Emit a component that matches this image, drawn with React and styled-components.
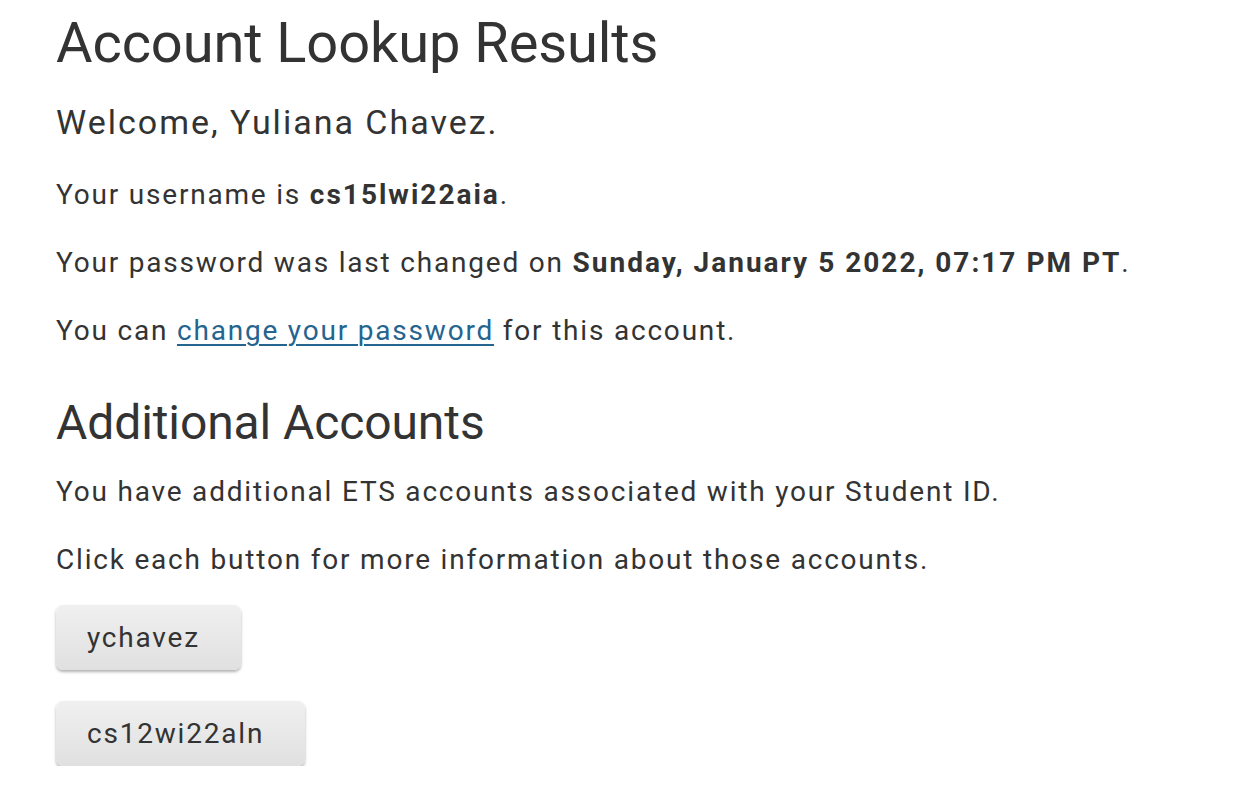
import React from "react";
import styled, { createGlobalStyle } from "styled-components";

const GlobalStyle = createGlobalStyle`
  html, body {
    margin: 0;
    padding: 0;
    background: #fff;
  }
  body {
    font-family: Roboto, "Liberation Sans", sans-serif;
    color: #333;
  }
`;

const Page = styled.main`
  padding: 9px 56px 0;
`;

const Title = styled.h1`
  margin: 0;
  font-size: 56px;
  font-weight: 400;
  line-height: 68px;
  letter-spacing: -0.1px;
`;

const Welcome = styled.h2`
  margin: 24px 0 0;
  font-size: 34px;
  font-weight: 400;
  line-height: 42px;
  letter-spacing: 2px;
`;

const SectionTitle = styled.h2`
  margin: 42px 0 0;
  font-size: 48px;
  font-weight: 400;
  line-height: 60px;
  letter-spacing: -0.1px;
`;

const Text = styled.p`
  margin: ${(p) => p.$gap || "28px"} 0 0;
  font-size: 28px;
  line-height: 40px;
  letter-spacing: 1.8px;

  strong {
    font-weight: 700;
    letter-spacing: 2px;
  }
`;

const Link = styled.a`
  color: #24648f;
  text-decoration: underline;
  text-underline-offset: 4px;
  text-decoration-thickness: 2px;
`;

const Buttons = styled.div`
  display: flex;
  flex-direction: column;
  align-items: flex-start;
  gap: 31px;
  margin-top: 25px;
`;

const AccountButton = styled.button`
  height: 65px;
  padding: 0 41px 0 31px;
  border: none;
  border-radius: 7px;
  background: linear-gradient(#f0f0f0, #e0e0e0);
  box-shadow: 0 2px 3px rgba(0, 0, 0, 0.3);
  font-family: inherit;
  font-size: 28px;
  letter-spacing: 1.8px;
  color: #333;
  cursor: pointer;
`;

export default function App() {
  return (
    <>
      <GlobalStyle />
      <Page>
        <Title>Account Lookup Results</Title>
        <Welcome>Welcome, Yuliana Chavez.</Welcome>
        <Text $gap="32px">
          Your username is <strong>cs15lwi22aia</strong>.
        </Text>
        <Text>
          Your password was last changed on{" "}
          <strong>Sunday, January 5 2022, 07:17 PM PT</strong>.
        </Text>
        <Text>
          You can <Link href="#">change your password</Link> for this account.
        </Text>
        <SectionTitle>Additional Accounts</SectionTitle>
        <Text $gap="19px">
          You have additional ETS accounts associated with your Student ID.
        </Text>
        <Text>Click each button for more information about those accounts.</Text>
        <Buttons>
          <AccountButton>ychavez</AccountButton>
          <AccountButton>cs12wi22aln</AccountButton>
        </Buttons>
      </Page>
    </>
  );
}
